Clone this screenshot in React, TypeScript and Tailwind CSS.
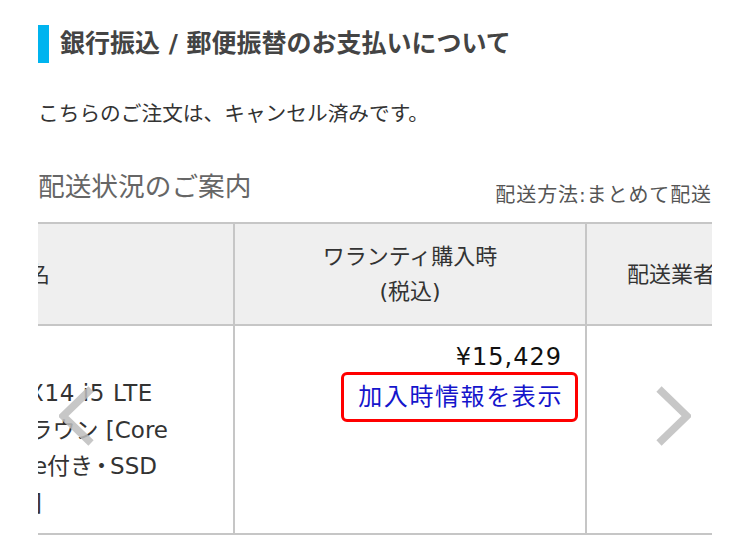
import React from "react";

const FONT = {
  fontFamily: '"DejaVu Sans", "Noto Sans CJK JP", sans-serif',
};

function Chevron({ dir }: { dir: "left" | "right" }) {
  const pts = dir === "right" ? "4,4 32,31 4,58" : "32,4 4,31 32,58";
  return (
    <svg width="36" height="62" viewBox="0 0 36 62" fill="none">
      <polyline
        points={pts}
        stroke="#bdbdbd"
        strokeOpacity="0.85"
        strokeWidth="7.5"
        strokeLinecap="butt"
        strokeLinejoin="miter"
      />
    </svg>
  );
}

export default function App() {
  return (
    <div
      className="h-[548px] w-[750px] overflow-hidden bg-white px-[38px]"
      style={FONT}
    >
      <div className="mt-[25px] flex h-[38px] items-center border-l-[11px] border-[#00b4ef] pl-[11px]">
        <h2 className="whitespace-nowrap text-[25px] font-bold leading-[38px] text-[#444]">
          銀行振込 / 郵便振替のお支払いについて
        </h2>
      </div>

      <p className="mt-[36px] whitespace-nowrap text-[20.7px] leading-[30px] text-[#333]">
        こちらのご注文は、キャンセル済みです。
      </p>

      <div className="mt-[42px] flex items-start justify-between">
        <h3 className="whitespace-nowrap text-[26.7px] leading-[32px] text-[#666]">
          配送状況のご案内
        </h3>
        <p className="mt-[12px] whitespace-nowrap text-[20px] leading-[24px] tracking-[0.9px] text-[#555]">
          配送方法:まとめて配送
        </p>
      </div>

      <div className="relative mt-[15px] w-[674px] overflow-hidden border-y-2 border-[#c6c6c6]">
        <div className="grid grid-cols-[195px_352px_127px]">
          {/* header row */}
          <div className="flex h-[102px] items-center justify-end overflow-hidden border-b-2 border-[#c6c6c6] bg-[#efefef]">
            <span className="mr-[183px] whitespace-nowrap text-[22px] leading-[35px] text-[#333]">
              商品名
            </span>
          </div>
          <div className="flex h-[102px] flex-col items-center justify-center border-b-2 border-l-2 border-[#c6c6c6] bg-[#efefef] text-[22px] leading-[35px] text-[#333]">
            <span className="whitespace-nowrap">ワランティ購入時</span>
            <span className="whitespace-nowrap">(税込)</span>
          </div>
          <div className="flex h-[102px] items-center overflow-hidden border-b-2 border-l-2 border-[#c6c6c6] bg-[#efefef] pl-[40px]">
            <span className="whitespace-nowrap text-[22px] leading-[35px] text-[#333]">
              配送業者
            </span>
          </div>

          {/* body row */}
          <div className="flex h-[207px] flex-col overflow-hidden pt-[49px] text-[23px] leading-[36.7px] text-[#333]">
            <div className="flex justify-end">
              <span className="mr-[80px] whitespace-nowrap tracking-[0.6px]">
                ThinkPad X14 i5 LTE
              </span>
            </div>
            <div className="flex justify-end">
              <span className="mr-[65px] whitespace-nowrap">ブラウン [Core</span>
            </div>
            <div className="flex justify-end">
              <span className="mr-[76px] whitespace-nowrap">
                Office付き<span className="mx-[-3px]">・</span>SSD
              </span>
            </div>
            <div className="flex justify-end">
              <span className="mr-[191px] whitespace-nowrap">i5-1335U]</span>
            </div>
          </div>
          <div className="flex h-[207px] flex-col items-end border-l-2 border-[#c6c6c6] pr-[7px] pt-[16px]">
            <span className="mr-[16px] whitespace-nowrap text-[24px] leading-[30px] tracking-[1px] text-[#111]">
              ¥15,429
            </span>
            <button className="h-[50px] whitespace-nowrap rounded-[6px] border-[3px] border-[#ff0000] bg-white pl-[14px] pr-[12px] text-[24px] leading-[44px] tracking-[1.6px] text-[#1515cc]">
              加入時情報を表示
            </button>
          </div>
          <div className="h-[207px] border-l-2 border-[#c6c6c6]" />
        </div>

        <div className="absolute left-[21px] top-[161px]">
          <Chevron dir="left" />
        </div>
        <div className="absolute left-[617px] top-[161px]">
          <Chevron dir="right" />
        </div>
      </div>
    </div>
  );
}
